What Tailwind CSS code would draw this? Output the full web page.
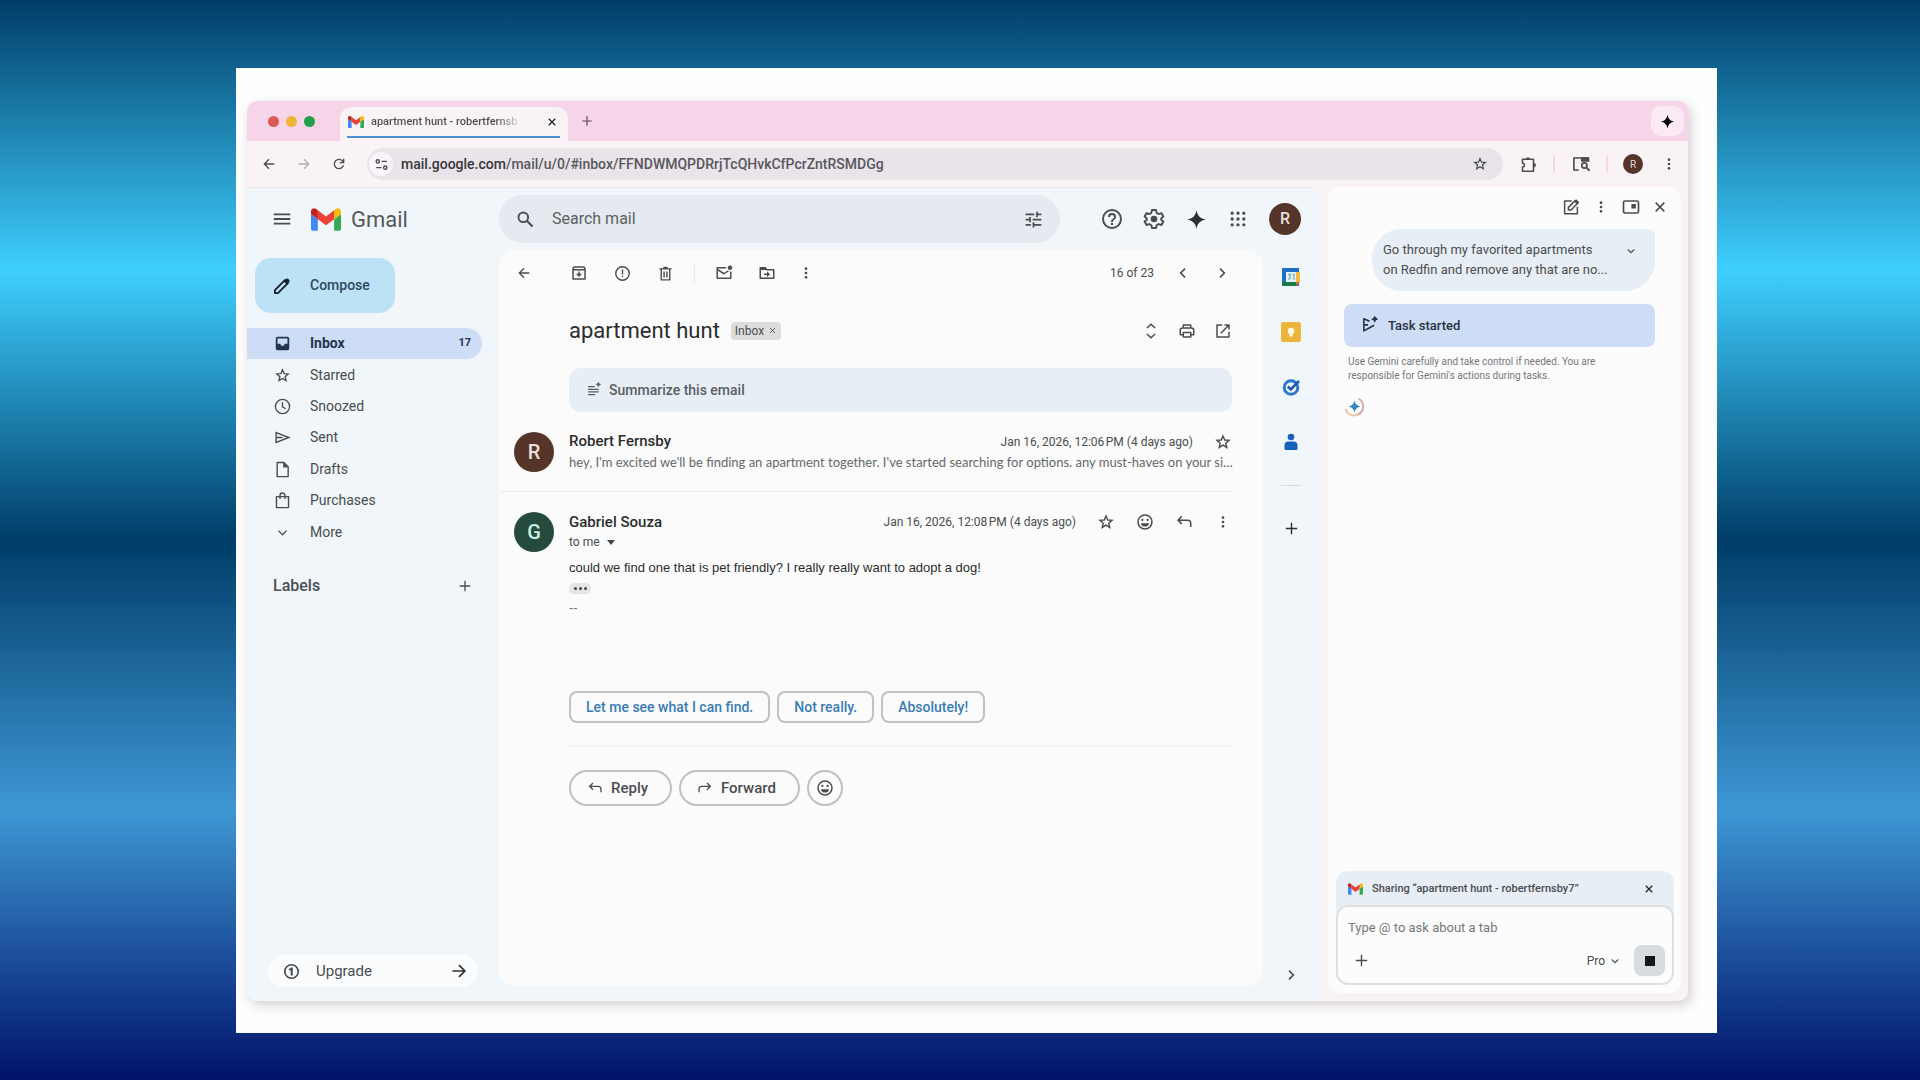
<!DOCTYPE html>
<html lang="en">
<head>
<meta charset="utf-8">
<meta name="viewport" content="width=device-width, initial-scale=1">
<title>apartment hunt - Gmail</title>
<script src="https://cdn.jsdelivr.net/npm/@tailwindcss/browser@4"></script>
</head>
<body class="flex min-h-screen bg-[linear-gradient(180deg,#003d68_0%,#3fcfff_25%,#003d68_50%,#3e97d5_75%,#00126a_100%)] pt-[68px] pr-[203px] pb-[47px] pl-[236px] font-[Roboto,'Liberation_Sans',sans-serif] text-[#4a4d50]">

<!-- Icon sprite -->
<svg class="hidden" aria-hidden="true">
  <symbol id="gmail" viewBox="52 42 88 66"><path fill="#4285f4" d="M58 108h14V74L52 59v43c0 3.32 2.69 6 6 6"/><path fill="#34a853" d="M120 108h14c3.32 0 6-2.69 6-6V59l-20 15"/><path fill="#fbbc04" d="M120 48v26l20-15v-8c0-7.42-8.47-11.65-14.4-7.2"/><path fill="#ea4335" d="M72 74V48l24 18 24-18v26L96 92"/><path fill="#c5221f" d="M52 51v8l20 15V48l-5.6-4.2c-5.94-4.45-14.4-.22-14.4 7.2"/></symbol>
  <symbol id="back" viewBox="0 0 24 24"><path fill="none" stroke="currentColor" stroke-width="2" d="M20 12H5M12 5l-7 7 7 7"/></symbol>
  <symbol id="forward" viewBox="0 0 24 24"><path fill="none" stroke="currentColor" stroke-width="2" d="M4 12h15M12 5l7 7-7 7"/></symbol>
  <symbol id="reload" viewBox="0 0 24 24"><path fill="currentColor" d="M12 20q-3.35 0-5.675-2.325T4 12t2.325-5.675T12 4q1.725 0 3.3.713T18 6.75V4h2v7h-7V9h4.2q-.8-1.4-2.187-2.2T12 6Q9.500 6 7.750 7.750T6 12t1.750 4.250T12 18q1.925 0 3.475-1.100T17.650 14h2.100q-.7 2.650-2.850 4.325T12 20"/></symbol>
  <symbol id="close" viewBox="0 0 24 24"><path fill="none" stroke="currentColor" stroke-width="2.400" d="M5.500 5.500l13 13M18.500 5.500l-13 13"/></symbol>
  <symbol id="plus" viewBox="0 0 24 24"><path fill="none" stroke="currentColor" stroke-width="2" d="M12 4v16M4 12h16"/></symbol>
  <symbol id="star" viewBox="0 0 24 24"><path fill="none" stroke="currentColor" stroke-width="1.900" d="M12 4l2.300 5.300 5.700.5-4.300 3.800 1.300 5.600L12 16.200l-5 3 1.300-5.600L4 9.800l5.700-.5z"/></symbol>
  <symbol id="dots" viewBox="0 0 24 24"><circle cx="12" cy="5.500" r="2" fill="currentColor"/><circle cx="12" cy="12" r="2" fill="currentColor"/><circle cx="12" cy="18.500" r="2" fill="currentColor"/></symbol>
  <symbol id="menu" viewBox="0 0 24 24"><path fill="currentColor" d="M3 18h18v-2H3zm0-5h18v-2H3zm0-7v2h18V6z"/></symbol>
  <symbol id="search" viewBox="0 0 24 24"><circle cx="9.500" cy="9.500" r="5.500" fill="none" stroke="currentColor" stroke-width="2.200"/><path fill="none" stroke="currentColor" stroke-width="2.600" d="M13.500 13.500l6.500 6.500"/></symbol>
  <symbol id="tune" viewBox="0 0 24 24"><path fill="currentColor" d="M3 17v2h6v-2zM3 5v2h10V5zm10 16v-2h8v-2h-8v-2h-2v6zM7 9v2H3v2h4v2h2V9zm14 4v-2H11v2zm-6-4h2V7h4V5h-4V3h-2z"/></symbol>
  <symbol id="site" viewBox="0 0 24 24"><circle cx="6" cy="7" r="2.600" fill="none" stroke="currentColor" stroke-width="2.200"/><circle cx="18" cy="17" r="2.600" fill="none" stroke="currentColor" stroke-width="2.200"/><path fill="none" stroke="currentColor" stroke-width="2.200" d="M12 7h8.500M3.500 17H12"/></symbol>
  <symbol id="help" viewBox="0 0 24 24"><path fill="currentColor" d="M11 18h2v-2h-2zm1-16a10 10 0 100 20 10 10 0 000-20m0 18a8 8 0 110-16 8 8 0 010 16m0-14a4 4 0 00-4 4h2a2 2 0 114 0c0 2-3 1.750-3 5h2c0-2.250 3-2.500 3-5a4 4 0 00-4-4"/></symbol>
  <symbol id="gear" viewBox="0 0 24 24"><path fill="none" stroke="currentColor" stroke-width="1.900" stroke-linejoin="round" d="M10 3h4l.6 2.900 2 1.150 2.800-.95 2 3.450L19.200 11.500v1.200l2.200 1.850-2 3.450-2.800-.95-2 1.150L14 21h-4l-.6-2.800-2-1.150-2.800.95-2-3.450 2.200-1.850v-1.200L2.600 9.550l2-3.450 2.800.95 2-1.150z"/><circle cx="12" cy="12" r="3.300" fill="currentColor"/></symbol>
  <symbol id="spark" viewBox="0 0 24 24"><path fill="currentColor" d="M12 1c.9 6.500 4.500 10.100 11 11-6.500.9-10.100 4.500-11 11-.9-6.500-4.500-10.100-11-11C7.500 11.100 11.100 7.500 12 1"/></symbol>
  <symbol id="apps" viewBox="0 0 24 24"><path fill="none" stroke="currentColor" stroke-width="4" stroke-linecap="round" d="M5 5h.01M12 5h.01M19 5h.01M5 12h.01M12 12h.01M19 12h.01M5 19h.01M12 19h.01M19 19h.01"/></symbol>
  <symbol id="pencil" viewBox="0 0 24 24"><path fill="none" stroke="currentColor" stroke-width="2.200" stroke-linejoin="round" d="M3.500 20.500v-3.600L15.500 4.900l3.600 3.600L7.100 20.500z"/><path fill="currentColor" d="M14 6.500L17 3.400q1.200-1 2.400 0l1.300 1.300q1 1.200 0 2.400L17.600 10z"/></symbol>
  <symbol id="inbox" viewBox="0 0 24 24"><path fill="currentColor" d="M19 2.500H5A2.500 2.500 0 002.500 5v14A2.500 2.500 0 005 21.500h14a2.500 2.500 0 002.500-2.500V5A2.500 2.500 0 0019 2.500m0 10h-4a3 3 0 01-6 0H5V5h14z"/></symbol>
  <symbol id="clock" viewBox="0 0 24 24"><circle cx="12" cy="12" r="10" fill="none" stroke="currentColor" stroke-width="1.900"/><path fill="none" stroke="currentColor" stroke-width="1.900" d="M12 6v6.500l4.500 2.700"/></symbol>
  <symbol id="send" viewBox="0 0 24 24"><path fill="none" stroke="currentColor" stroke-width="2" d="M3 5l18 7-18 7zM3 12h9"/></symbol>
  <symbol id="draft" viewBox="0 0 24 24"><path fill="none" stroke="currentColor" stroke-width="2" stroke-linejoin="round" d="M4.500 2h9.500l6 6v14H4.500z"/><path fill="currentColor" d="M13 2v7h7z"/></symbol>
  <symbol id="bag" viewBox="0 0 24 24"><path fill="none" stroke="currentColor" stroke-width="2" stroke-linejoin="round" d="M3.500 6.500h17V22h-17zM8.500 10V5a3.500 3.500 0 017 0v5"/></symbol>
  <symbol id="down" viewBox="0 0 24 24"><path fill="none" stroke="currentColor" stroke-width="2.200" d="M5.500 9l6.500 6.500L18.500 9"/></symbol>
  <symbol id="left" viewBox="0 0 24 24"><path fill="none" stroke="currentColor" stroke-width="2.400" d="M15 5.500L8.500 12l6.500 6.500"/></symbol>
  <symbol id="right" viewBox="0 0 24 24"><path fill="none" stroke="currentColor" stroke-width="2.400" d="M9 5.500l6.500 6.500L9 18.500"/></symbol>
  <symbol id="archive" viewBox="0 0 24 24"><path fill="none" stroke="currentColor" stroke-width="2" stroke-linejoin="round" d="M4 6l1.500-2h13L20 6v14H4zM4 7.500h16M12 10v6"/><path fill="currentColor" d="M7.800 13h8.400L12 17.200z"/></symbol>
  <symbol id="report" viewBox="0 0 24 24"><circle cx="12" cy="12" r="9.500" fill="none" stroke="currentColor" stroke-width="2"/><path fill="currentColor" d="M11 6.500h2v7h-2zm0 8.500h2v2h-2z"/></symbol>
  <symbol id="trash" viewBox="0 0 24 24"><path fill="none" stroke="currentColor" stroke-width="2" stroke-linejoin="round" d="M6 6v15h12V6M3.500 5.500h17M9 3.500h6M10 9v8.500M14 9v8.500"/></symbol>
  <symbol id="unread" viewBox="0 0 24 24"><path fill="none" stroke="currentColor" stroke-width="2" stroke-linejoin="round" d="M15 5H3v14h18v-9M3.500 7.500L12 13l6-4"/><circle cx="20" cy="5" r="3" fill="currentColor"/></symbol>
  <symbol id="move" viewBox="0 0 24 24"><path fill="none" stroke="currentColor" stroke-width="2" stroke-linejoin="round" d="M3 5h6.500l2 2.500H21V19H3z"/><path fill="currentColor" d="M3 4h7l2 4H3zM12 9.500l4 4-4 4v-3H8v-2h4z"/></symbol>
  <symbol id="unfold" viewBox="0 0 24 24"><path fill="none" stroke="currentColor" stroke-width="2" d="M6.500 8L12 3l5.500 5M6.500 16l5.500 5 5.500-5"/></symbol>
  <symbol id="print" viewBox="0 0 24 24"><path fill="none" stroke="currentColor" stroke-width="2" stroke-linejoin="round" d="M7 8V4h10v4M7 17H3v-6q0-3 3-3h12q3 0 3 3v6h-4M7 14h10v6H7z"/></symbol>
  <symbol id="open" viewBox="0 0 24 24"><path fill="none" stroke="currentColor" stroke-width="2" stroke-linejoin="round" d="M11 4H4v16h16v-7M14 4h6v6M20 4L9 15"/></symbol>
  <symbol id="summary" viewBox="0 0 24 24"><path fill="none" stroke="currentColor" stroke-width="2" d="M2 8h11M2 12.500h18M2 17h18M2 21.500h12"/><path fill="currentColor" d="M19.500-1q.7 4.500 5 5-4.300.5-5 5-.7-4.500-5-5 4.300-.5 5-5"/></symbol>
  <symbol id="smile" viewBox="0 0 24 24"><circle cx="12" cy="12" r="9.300" fill="none" stroke="currentColor" stroke-width="2"/><circle cx="8.500" cy="9.300" r="1.500" fill="currentColor"/><circle cx="15.500" cy="9.300" r="1.500" fill="currentColor"/><path fill="currentColor" d="M6.500 13.500h11a5.600 5.600 0 01-11 0"/></symbol>
  <symbol id="reply" viewBox="0 0 24 24"><path fill="none" stroke="currentColor" stroke-width="2" d="M9 4.500L4 9.500l5 5M4.500 9.500H17q4 0 4 4.500v4.500"/></symbol>
  <symbol id="fwd" viewBox="0 0 24 24"><path fill="none" stroke="currentColor" stroke-width="2" d="M15 4.500l5 5-5 5M19.500 9.500H7q-4 0-4 4.500v4.500"/></symbol>
  <symbol id="ext" viewBox="0 0 24 24"><path fill="none" stroke="currentColor" stroke-width="2.200" stroke-linejoin="round" d="M3.500 4.500H19v17H3.500v-5.700a2.800 2.800 0 000-5.600z"/><path fill="currentColor" d="M8.500 4.500a2.800 2.800 0 015.600 0zM19.500 10a3 3 0 010 6z"/></symbol>
  <symbol id="tabsearch" viewBox="0 0 24 24"><path fill="none" stroke="currentColor" stroke-width="2.200" stroke-linejoin="round" d="M9 20H2.500V4H22v5"/><path fill="currentColor" d="M12 3h10.500v6H12z"/><circle cx="16.500" cy="14" r="3.500" fill="none" stroke="currentColor" stroke-width="2.200"/><path stroke="currentColor" stroke-width="2.400" d="M19 16.500l4.500 4.500"/></symbol>
  <symbol id="edit" viewBox="0 0 24 24"><path fill="none" stroke="currentColor" stroke-width="2" stroke-linejoin="round" d="M13 4H3.500v17h17v-9.500M8.500 16v-3.500l9-9 3.500 3.500-9 9z"/><path fill="currentColor" d="M16 4.500L19 1.500l4 4-3 3z"/></symbol>
  <symbol id="pip" viewBox="0 0 24 24"><rect x="2" y="4" width="20" height="16" rx="2" fill="none" stroke="currentColor" stroke-width="2.200"/><path fill="currentColor" d="M12.500 8h6v6h-6z"/></symbol>
  <symbol id="task" viewBox="0 0 24 24"><path fill="none" stroke="currentColor" stroke-width="2.200" stroke-linejoin="round" d="M12 7.500L4 4v17l14.500-8M4 12.500h6"/><path fill="currentColor" d="M19.500-1q.8 4.500 5.500 5.500-4.700.9-5.500 5.500-.8-4.600-5.500-5.500Q18.700 3.500 19.500-1"/></symbol>
  <symbol id="coin" viewBox="0 0 24 24"><circle cx="12" cy="12" r="9.500" fill="none" stroke="currentColor" stroke-width="2.400"/><path fill="currentColor" d="M8.500 8.500L11.500 6.500h2.300v11h-3V9.800L8.500 11z"/></symbol>
</svg>

<div class="flex min-w-0 flex-1 bg-[#fefefe] pt-[33px] pr-[29px] pb-8 pl-[11px]">
<div class="flex min-w-0 flex-1 flex-col overflow-hidden rounded-[10px] bg-[#f9f3f5] shadow-[3px_4px_12px_rgba(60,30,50,0.22)]">

  <!-- Tab strip -->
  <header class="flex h-10 items-center bg-[#f7d5e9]">
    <div class="flex w-[93px] gap-[7px] pl-[21px]">
      <span class="size-[11px] rounded-full bg-[#dc5a54]"></span><span class="size-[11px] rounded-full bg-[#eeb535]"></span><span class="size-[11px] rounded-full bg-[#22a04c]"></span>
    </div>
    <div class="relative mt-[6px] flex h-[34px] w-[228px] items-center rounded-t-xl bg-[#f9f3f5] pr-[6px] pb-1 pl-2">
      <svg class="h-3 w-4"><use href="#gmail"/></svg>
      <span class="ml-[7px] w-[156px] bg-[linear-gradient(90deg,#4a4d50_80%,transparent_97%)] bg-clip-text text-[11px] font-medium whitespace-nowrap text-transparent">apartment hunt - robertfernsb</span>
      <button aria-label="Close tab" class="ml-auto flex size-5 items-center justify-center text-[#1f1f1f]"><svg class="size-3"><use href="#close"/></svg></button>
      <span class="absolute bottom-[3px] left-[7px] h-[2px] w-[213px] bg-[#4a8fce]"></span>
    </div>
    <button aria-label="New tab" class="ml-[11px] flex size-4 items-center justify-center text-[#5b4753]"><svg class="size-[14px]"><use href="#plus"/></svg></button>
    <button aria-label="Gemini" class="mr-1 ml-auto flex h-[30px] w-[33px] items-center justify-center rounded-[10px] bg-[#fbeaf4] text-black"><svg class="size-[15px]"><use href="#spark"/></svg></button>
  </header>

  <!-- Address bar -->
  <div class="flex h-[46px] items-center">
    <nav class="flex w-[120px] items-center gap-[19px] pl-[14px]" aria-label="History">
      <button aria-label="Back" class="size-4"><svg class="size-4"><use href="#back"/></svg></button>
      <button aria-label="Forward" class="size-4 text-[#b3adb0]"><svg class="size-4"><use href="#forward"/></svg></button>
      <button aria-label="Reload" class="size-4"><svg class="size-4"><use href="#reload"/></svg></button>
    </nav>
    <div class="flex h-8 min-w-0 flex-1 items-center rounded-full bg-[#e8e4ea] pr-[15px] pl-[2px]">
      <span class="flex size-6 items-center justify-center rounded-full bg-[#f9f5f8]"><svg class="size-[15px]"><use href="#site"/></svg></span>
      <a href="#inbox" class="ml-2 text-[14px] font-medium text-[#5a575c]"><span class="text-[#39363a]">mail.google.com</span>/mail/u/0/#inbox/FFNDWMQPDRrjTcQHvkCfPcrZntRSMDGg</a>
      <button aria-label="Bookmark" class="ml-auto"><svg class="size-4"><use href="#star"/></svg></button>
    </div>
    <div class="flex items-center pr-[11px] pl-[17px]">
      <button aria-label="Extensions"><svg class="size-[17px]"><use href="#ext"/></svg></button>
      <span class="ml-4 h-4 w-[2px] bg-[#f7d5e9]"></span>
      <button aria-label="Search tabs" class="ml-[17px]"><svg class="size-[18px]"><use href="#tabsearch"/></svg></button>
      <span class="ml-4 h-4 w-[2px] bg-[#f7d5e9]"></span>
      <button aria-label="Profile" class="ml-[15px] flex size-5 items-center justify-center rounded-full bg-[#553529] text-[10px] text-[#e6d9d4]">R</button>
      <button aria-label="Browser menu" class="ml-[18px]"><svg class="size-4"><use href="#dots"/></svg></button>
    </div>
  </div>

  <div class="flex min-h-0 flex-1">
    <!-- Gmail -->
    <div class="flex min-w-0 flex-1 flex-col rounded-tr-lg border-t border-[#eee8ec] bg-[#f0f6f9]">
      <div class="flex h-[62px] items-center">
        <div class="flex w-[252px] items-center pl-6">
          <button aria-label="Main menu" class="size-[22px]"><svg class="size-[22px]"><use href="#menu"/></svg></button>
          <svg class="ml-[18px] h-[23px] w-[30px]"><use href="#gmail"/></svg>
          <span class="ml-[10px] text-[22px] text-[#55585b]">Gmail</span>
        </div>
        <label class="flex h-12 min-w-0 flex-1 items-center rounded-full bg-[#e4eaef] pr-4 pl-4">
          <svg class="size-[21px]"><use href="#search"/></svg>
          <input type="text" placeholder="Search mail" aria-label="Search mail" class="ml-4 min-w-0 flex-1 bg-transparent text-[16px] placeholder:text-[#5c6064] focus:outline-none">
          <svg class="size-[21px]"><use href="#tune"/></svg>
        </label>
        <div class="flex items-center gap-[2px] pr-[18px] pl-8">
          <button aria-label="Help" class="flex size-10 items-center justify-center"><svg class="size-6"><use href="#help"/></svg></button>
          <button aria-label="Settings" class="flex size-10 items-center justify-center"><svg class="size-6"><use href="#gear"/></svg></button>
          <button aria-label="Ask Gemini" class="flex size-10 items-center justify-center text-[#303133]"><svg class="size-[21px]"><use href="#spark"/></svg></button>
          <button aria-label="Apps" class="flex size-10 items-center justify-center"><svg class="size-5"><use href="#apps"/></svg></button>
          <button aria-label="Account" class="ml-[9px] flex size-8 items-center justify-center rounded-full bg-[#553529] text-[16px] font-medium text-[#eadfda]">R</button>
        </div>
      </div>

      <div class="flex min-h-0 flex-1">
        <!-- Folders -->
        <aside class="flex w-[252px] flex-col pt-2 pb-[14px]">
          <button class="ml-2 flex h-[55px] w-[140px] items-center rounded-2xl bg-[#bde2f6] pl-[17px] text-[14px] font-medium text-[#2c4a5c]"><svg class="size-5 text-[#14212b]"><use href="#pencil"/></svg><span class="ml-[18px]">Compose</span></button>
          <nav class="mt-[15px] grid h-[220px] auto-rows-fr text-[14px]" aria-label="Folders">
            <a href="#inbox" class="mr-[17px] flex items-center rounded-r-full bg-[#cdddf6] pr-[11px] pl-[27px] font-bold text-[#24364f]"><svg class="size-[17px]"><use href="#inbox"/></svg><span class="ml-[19px]">Inbox</span><span class="ml-auto text-[11px]">17</span></a>
            <a href="#starred" class="flex items-center pl-[27px]"><svg class="size-[17px]"><use href="#star"/></svg><span class="ml-[19px]">Starred</span></a>
            <a href="#snoozed" class="flex items-center pl-[27px]"><svg class="size-[17px]"><use href="#clock"/></svg><span class="ml-[19px]">Snoozed</span></a>
            <a href="#sent" class="flex items-center pl-[27px]"><svg class="size-[17px]"><use href="#send"/></svg><span class="ml-[19px]">Sent</span></a>
            <a href="#drafts" class="flex items-center pl-[27px]"><svg class="size-[17px]"><use href="#draft"/></svg><span class="ml-[19px]">Drafts</span></a>
            <a href="#purchases" class="flex items-center pl-[27px]"><svg class="size-[17px]"><use href="#bag"/></svg><span class="ml-[19px]">Purchases</span></a>
            <a href="#more" class="flex items-center pl-[27px]"><svg class="size-[17px] p-[1px]"><use href="#down"/></svg><span class="ml-[19px]">More</span></a>
          </nav>
          <div class="mt-[26px] flex h-6 items-center justify-between pr-[26px] pl-[26px]">
            <h2 class="text-[16px] font-medium">Labels</h2>
            <button aria-label="Create label"><svg class="size-4"><use href="#plus"/></svg></button>
          </div>
          <button class="mt-auto mr-[21px] ml-[21px] flex h-8 items-center rounded-full bg-[#fbfcfd] pr-[9px] pl-[15px] text-[15px]"><svg class="size-[17px]"><use href="#coin"/></svg><span class="ml-4">Upgrade</span><svg class="ml-auto size-5 text-[#303133]"><use href="#forward"/></svg></button>
        </aside>

        <!-- Conversation -->
        <main class="mb-[15px] min-w-0 flex-1 rounded-2xl bg-[#fbfbfb]">
          <div class="flex h-[46px] items-center pr-[25px] pl-[9px]">
            <div class="flex flex-1 items-center gap-[11px]">
              <button aria-label="Back to inbox" class="mr-3 flex size-8 items-center justify-center"><svg class="size-4"><use href="#back"/></svg></button>
              <button aria-label="Archive" class="flex size-8 items-center justify-center"><svg class="size-[18px]"><use href="#archive"/></svg></button>
              <button aria-label="Report spam" class="flex size-8 items-center justify-center"><svg class="size-[17px]"><use href="#report"/></svg></button>
              <button aria-label="Delete" class="flex size-8 items-center justify-center"><svg class="size-[17px]"><use href="#trash"/></svg></button>
              <span class="ml-[2px] h-5 w-px bg-[#e6e8ea]"></span>
              <button aria-label="Mark as unread" class="ml-[2px] flex size-8 items-center justify-center"><svg class="size-[18px]"><use href="#unread"/></svg></button>
              <button aria-label="Move to" class="flex size-8 items-center justify-center"><svg class="size-[18px]"><use href="#move"/></svg></button>
              <button aria-label="More actions" class="ml-[-4px] flex size-8 items-center justify-center"><svg class="size-4"><use href="#dots"/></svg></button>
            </div>
            <span class="mr-[21px] text-[12px]">16 of 23</span>
            <button aria-label="Newer"><svg class="size-4"><use href="#left"/></svg></button>
            <button aria-label="Older" class="mr-2 ml-[23px]"><svg class="size-4"><use href="#right"/></svg></button>
          </div>

          <div class="pr-[31px]">
            <div class="flex h-[69px] items-center pl-[70px]">
              <h1 class="text-[22px] text-[#2c2d2e]">apartment hunt</h1>
              <span class="ml-[11px] flex h-[18px] items-center gap-1 rounded bg-[#dddddd] px-1 text-[12px]">Inbox <button aria-label="Remove label"><svg class="size-[9px]"><use href="#close"/></svg></button></span>
              <div class="ml-auto flex gap-[18px]">
                <button aria-label="Expand all"><svg class="size-[18px]"><use href="#unfold"/></svg></button>
                <button aria-label="Print all"><svg class="size-[18px]"><use href="#print"/></svg></button>
                <button aria-label="Open in new window"><svg class="size-[18px]"><use href="#open"/></svg></button>
              </div>
            </div>

            <div class="mt-[3px] pl-[70px]"><button class="flex h-11 w-full items-center rounded-xl bg-[#e8eef5] pl-[18px] text-[14px] font-medium text-[#5a5e64]"><svg class="mb-[2px] size-[14px] overflow-visible"><use href="#summary"/></svg><span class="ml-2">Summarize this email</span></button></div>

            <article class="flex h-20 items-center border-b border-[#eceeef]">
              <span class="mr-[15px] ml-[15px] flex size-10 shrink-0 items-center justify-center rounded-full bg-[#553529] text-[20px] font-medium text-[#eadfda]">R</span>
              <div class="min-w-0 flex-1">
                <div class="flex h-5 items-center"><span class="text-[15px] font-medium text-[#2c2d2e]">Robert Fernsby</span><time class="mr-[21px] ml-auto text-[12px]">Jan 16, 2026, 12:06&#8239;PM (4 days ago)</time><button aria-label="Star message"><svg class="size-[18px]"><use href="#star"/></svg></button></div>
                <p class="font-[Lato,sans-serif] text-[13px] leading-5 whitespace-nowrap text-[#66696b]">hey, I'm excited we'll be finding an apartment together. I've started searching for options. any must-haves on your si…</p>
              </div>
            </article>

            <article class="flex pt-5">
              <span class="mr-[15px] ml-[15px] flex size-10 shrink-0 items-center justify-center rounded-full bg-[#254a3e] text-[20px] font-medium text-[#c9efe0]">G</span>
              <div class="min-w-0 flex-1">
                <div class="flex h-5 items-center"><span class="text-[15px] font-medium text-[#2c2d2e]">Gabriel Souza</span><time class="mr-[21px] ml-auto text-[12px]">Jan 16, 2026, 12:08&#8239;PM (4 days ago)</time>
                  <div class="flex gap-[21px]">
                    <button aria-label="Star message"><svg class="size-[18px]"><use href="#star"/></svg></button>
                    <button aria-label="Add reaction"><svg class="size-[18px]"><use href="#smile"/></svg></button>
                    <button aria-label="Reply to message"><svg class="size-[18px]"><use href="#reply"/></svg></button>
                    <button aria-label="More message actions"><svg class="size-[18px] p-[1px]"><use href="#dots"/></svg></button>
                  </div>
                </div>
                <button class="flex h-5 items-center gap-[7px] text-[12px]">to me <span class="border-x-4 border-t-[5px] border-x-transparent border-t-[#444746]"></span></button>
                <p class="mt-[6px] font-['Liberation_Sans',sans-serif] text-[13px] leading-5 text-[#2c2d2e]">could we find one that is pet friendly? I really really want to adopt a dog!</p>
                <div class="flex h-5 items-center"><button aria-label="Show trimmed content" class="flex h-[11px] w-[22px] items-center justify-center gap-[2px] rounded-full bg-[#e4e5e6]"><span class="size-[3px] rounded-full bg-[#444746]"></span><span class="size-[3px] rounded-full bg-[#444746]"></span><span class="size-[3px] rounded-full bg-[#444746]"></span></button></div>
                <p class="font-['Liberation_Sans',sans-serif] text-[13px] leading-5 text-[#777777]">--</p>

                <div class="mt-[73px] flex gap-[7px] border-b border-[#eceeef] pb-[23px] text-[14px] font-medium text-[#3a7db6]">
                  <button class="h-8 rounded-lg border-2 border-[#bfc1c2] px-[15px]">Let me see what I can find.</button>
                  <button class="h-8 rounded-lg border-2 border-[#bfc1c2] px-[15px]">Not really.</button>
                  <button class="h-8 rounded-lg border-2 border-[#bfc1c2] px-[15px]">Absolutely!</button>
                </div>
                <div class="mt-[23px] flex gap-[7px] text-[15px] font-medium">
                  <button class="flex h-9 w-[103px] items-center rounded-full border-2 border-[#bfc1c2] pl-4"><svg class="size-4"><use href="#reply"/></svg><span class="ml-2">Reply</span></button>
                  <button class="flex h-9 w-[121px] items-center rounded-full border-2 border-[#bfc1c2] pl-4"><svg class="size-4"><use href="#fwd"/></svg><span class="ml-2">Forward</span></button>
                  <button aria-label="React with emoji" class="flex size-9 items-center justify-center rounded-full border-2 border-[#bfc1c2]"><svg class="size-[18px]"><use href="#smile"/></svg></button>
                </div>
              </div>
            </article>
          </div>
        </main>

        <!-- App rail -->
        <aside class="flex w-14 flex-col items-center pt-[17px] pb-[18px]" aria-label="Side panel">
          <button aria-label="Calendar"><svg class="size-5" viewBox="0 0 20 20"><path fill="#1f6fc4" d="M2 1h16v18H2a1 1 0 01-1-1V2a1 1 0 011-1"/><path fill="#f2b93b" d="M14 5h5v10h-5z"/><path fill="#1a7a45" d="M1 15h14v4H2a1 1 0 01-1-1z"/><path fill="#e0653a" d="M15 15h4l-4 4z"/><path fill="#e6f2fb" d="M5 5h10v10H5z"/><path fill="none" stroke="#7fb2a0" stroke-width="1.300" d="M7 7.500h2.500L8.500 9.700l1 1.300-2.500 1.500M11.500 8l1.500-.7v5.700"/></svg></button>
          <button aria-label="Keep" class="mt-[35px]"><svg class="size-5" viewBox="0 0 20 20"><rect width="20" height="20" rx="2.500" fill="#ecb53a"/><circle cx="10" cy="9" r="3.300" fill="#fff8e6"/><path fill="#fff8e6" d="M8.500 11h3v3.500h-3z"/></svg></button>
          <button aria-label="Tasks" class="mt-[35px]"><svg class="size-5" viewBox="0 0 20 20"><circle cx="10" cy="10.500" r="6.800" fill="none" stroke="#2f78d0" stroke-width="3"/><path fill="none" stroke="#1d5cae" stroke-width="2.600" d="M6.800 9.500l3 3L18 4"/></svg></button>
          <button aria-label="Contacts" class="mt-[35px]"><svg class="size-5" viewBox="0 0 20 20"><circle cx="10" cy="5" r="3.300" fill="#1762b8"/><path fill="#1762b8" d="M3.500 17V13.500q0-4 4-4h5q4 0 4 4V17q0 1-1 1h-11q-1 0-1-1"/></svg></button>
          <span class="mt-[33px] h-px w-5 bg-[#d4dadd]"></span>
          <button aria-label="Get add-ons" class="mt-[34px] text-[#303133]"><svg class="size-[17px]"><use href="#plus"/></svg></button>
          <button aria-label="Hide side panel" class="mt-auto"><svg class="size-4"><use href="#right"/></svg></button>
        </aside>
      </div>
    </div>

    <!-- Gemini panel -->
    <section class="mr-[7px] mb-2 ml-[9px] flex w-[353px] flex-col rounded-xl bg-[#fcfcfd]" aria-label="Gemini">
      <div class="flex h-[42px] items-center justify-end gap-[13px] pr-[13px] pb-[2px]">
        <button aria-label="New chat"><svg class="size-[18px]"><use href="#edit"/></svg></button>
        <button aria-label="Chat options"><svg class="size-4"><use href="#dots"/></svg></button>
        <button aria-label="Pop out"><svg class="size-[18px]"><use href="#pip"/></svg></button>
        <button aria-label="Close panel" class="ml-[-1px]"><svg class="size-4"><use href="#close"/></svg></button>
      </div>
      <div class="mr-[26px] ml-11 flex h-[62px] items-center justify-between rounded-[30px] rounded-tr-md bg-[#e8eef5] pr-[18px] pl-[11px] text-[13px] leading-5">
        <p class="w-[228px]">Go through my favorited apartments<br>on Redfin and remove any that are no...</p>
        <button aria-label="Expand prompt" class="mb-[18px]"><svg class="size-3"><use href="#down"/></svg></button>
      </div>
      <div class="mt-[13px] mr-[26px] ml-4 flex h-[43px] items-center rounded-lg bg-[#cdddf6] pl-[17px] text-[13px] font-medium text-[#27303d]"><svg class="mb-[2px] size-[17px] overflow-visible"><use href="#task"/></svg><span class="ml-[10px]">Task started</span></div>
      <p class="mt-2 ml-5 w-[270px] text-[10px] leading-[14px] text-[#75787a]">Use Gemini carefully and take control if needed. You are responsible for Gemini's actions during tasks.</p>
      <svg class="mt-[13px] ml-4 size-[21px]" viewBox="0 0 21 21" role="img" aria-label="Working"><path fill="none" stroke="#e2cda9" stroke-width="2" d="M1.500 13A9 9 0 0014 18.500"/><path fill="none" stroke="#d3a8a5" stroke-width="2" d="M14 18.500A9 9 0 0014.500 2.500"/><path fill="#3c86bd" d="M10.500 4.500q.9 5.100 6 6-5.100.9-6 6-.9-5.100-6-6 5.100-.9 6-6"/></svg>

      <div class="mt-auto mr-[7px] mb-2 ml-2">
        <div class="flex h-[42px] items-center rounded-t-xl bg-[#e8eef5] pr-[19px] pb-[6px] pl-3 text-[11px] font-medium"><svg class="h-3 w-[15px]"><use href="#gmail"/></svg><span class="ml-[9px]">Sharing “apartment hunt - robertfernsby7”</span><button aria-label="Stop sharing" class="ml-auto text-[#1f1f1f]"><svg class="size-3"><use href="#close"/></svg></button></div>
        <div class="relative -mt-2 flex h-20 flex-col rounded-xl border-2 border-[#dddfe1] bg-[#fcfcfd]">
          <input type="text" placeholder="Type @ to ask about a tab" aria-label="Prompt" class="mt-[10px] h-5 bg-transparent pl-[10px] text-[13px] placeholder:text-[#75787a] focus:outline-none">
          <div class="flex items-center pt-2 pr-[7px] pl-[15px]">
            <button aria-label="Add context"><svg class="size-[17px]"><use href="#plus"/></svg></button>
            <button class="ml-auto flex items-center gap-1 text-[12px]">Pro <svg class="size-3"><use href="#down"/></svg></button>
            <button aria-label="Stop" class="ml-[13px] flex size-[31px] items-center justify-center rounded-lg bg-[#d6dce0]"><span class="size-[10px] bg-[#14181b]"></span></button>
          </div>
        </div>
      </div>
    </section>
  </div>
</div>
</div>
</body>
</html>
